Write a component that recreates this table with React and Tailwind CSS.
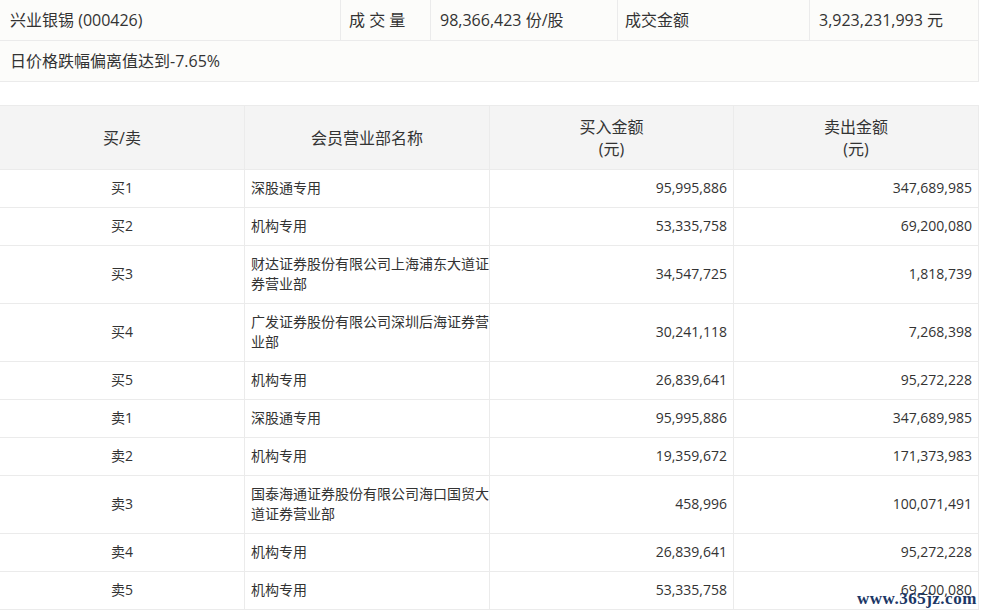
import React from 'react';

const font = { fontFamily: '"Open Sans", "Noto Sans CJK SC", sans-serif' };

const rows = [
  ['买1', '深股通专用', '95,995,886', '347,689,985'],
  ['买2', '机构专用', '53,335,758', '69,200,080'],
  ['买3', '财达证券股份有限公司上海浦东大道证券营业部', '34,547,725', '1,818,739'],
  ['买4', '广发证券股份有限公司深圳后海证券营业部', '30,241,118', '7,268,398'],
  ['买5', '机构专用', '26,839,641', '95,272,228'],
  ['卖1', '深股通专用', '95,995,886', '347,689,985'],
  ['卖2', '机构专用', '19,359,672', '171,373,983'],
  ['卖3', '国泰海通证券股份有限公司海口国贸大道证券营业部', '458,996', '100,071,491'],
  ['卖4', '机构专用', '26,839,641', '95,272,228'],
  ['卖5', '机构专用', '53,335,758', '69,200,080'],
];

function SummaryTable() {
  return (
    <div className="w-[979px] bg-[#fcfcfa] text-[16px] leading-6 text-[#333]">
      <div className="grid grid-cols-[341px_90px_187px_192px_169px] border-b border-[#ebebeb]">
        <div className="h-10 flex items-center pl-[10px] border-r border-[#ebebeb]">兴业银锡 (000426)</div>
        <div className="h-10 flex items-center pl-[8px] border-r border-[#ebebeb] whitespace-pre">成 交 量</div>
        <div className="h-10 flex items-center pl-[9px] border-r border-[#ebebeb]">98,366,423 份/股</div>
        <div className="h-10 flex items-center pl-[7px] border-r border-[#ebebeb]">成交金额</div>
        <div className="h-10 flex items-center pl-[9px] border-r border-[#ebebeb]">3,923,231,993 元</div>
      </div>
      <div className="h-[41px] flex items-center pl-[10px] border-b border-r border-[#ebebeb]">
        日价格跌幅偏离值达到-7.65%
      </div>
    </div>
  );
}

function SeatTable() {
  return (
    <div className="mt-[23px] w-[979px] border-t border-[#ebebeb] text-[#333]">
      <div className="grid grid-cols-[245px_245px_244px_245px] bg-[#f4f4f4] text-[16px] leading-[22px] border-b border-[#ebebeb]">
        <div className="flex items-center justify-center pt-[10px] pb-[9px] border-r border-[#ebebeb]">买/卖</div>
        <div className="flex items-center justify-center pt-[10px] pb-[9px] border-r border-[#ebebeb]">会员营业部名称</div>
        <div className="flex flex-col items-center justify-center pt-[10px] pb-[9px] border-r border-[#ebebeb]">
          <span>买入金额</span>
          <span>(元)</span>
        </div>
        <div className="flex flex-col items-center justify-center pt-[10px] pb-[9px] border-r border-[#ebebeb]">
          <span>卖出金额</span>
          <span>(元)</span>
        </div>
      </div>
      {rows.map(([side, name, buy, sell]) => (
        <div key={side} className="grid grid-cols-[245px_245px_244px_245px] bg-white text-[14px] leading-5 border-b border-[#ebebeb]">
          <div className="flex items-center justify-center pt-2 pb-[9px] border-r border-[#ebebeb]">{side}</div>
          <div className="flex items-center pt-2 pb-[9px] pl-[6px] border-r border-[#ebebeb]">{name}</div>
          <div className="flex items-center justify-end pt-2 pb-[9px] pr-[6px] border-r border-[#ebebeb]">{buy}</div>
          <div className="flex items-center justify-end pt-2 pb-[9px] pr-[6px] border-r border-[#ebebeb]">{sell}</div>
        </div>
      ))}
    </div>
  );
}

export default function App() {
  return (
    <div className="relative w-[981px] h-[615px] overflow-hidden bg-white" style={font}>
      <SummaryTable />
      <SeatTable />
      <div
        className="absolute left-[857px] top-[590px] text-[17px] font-bold leading-none text-[#1c3766] tracking-[0.5px]"
        style={{ fontFamily: '"Liberation Serif", serif' }}
      >
        www.365jz.com
      </div>
    </div>
  );
}
